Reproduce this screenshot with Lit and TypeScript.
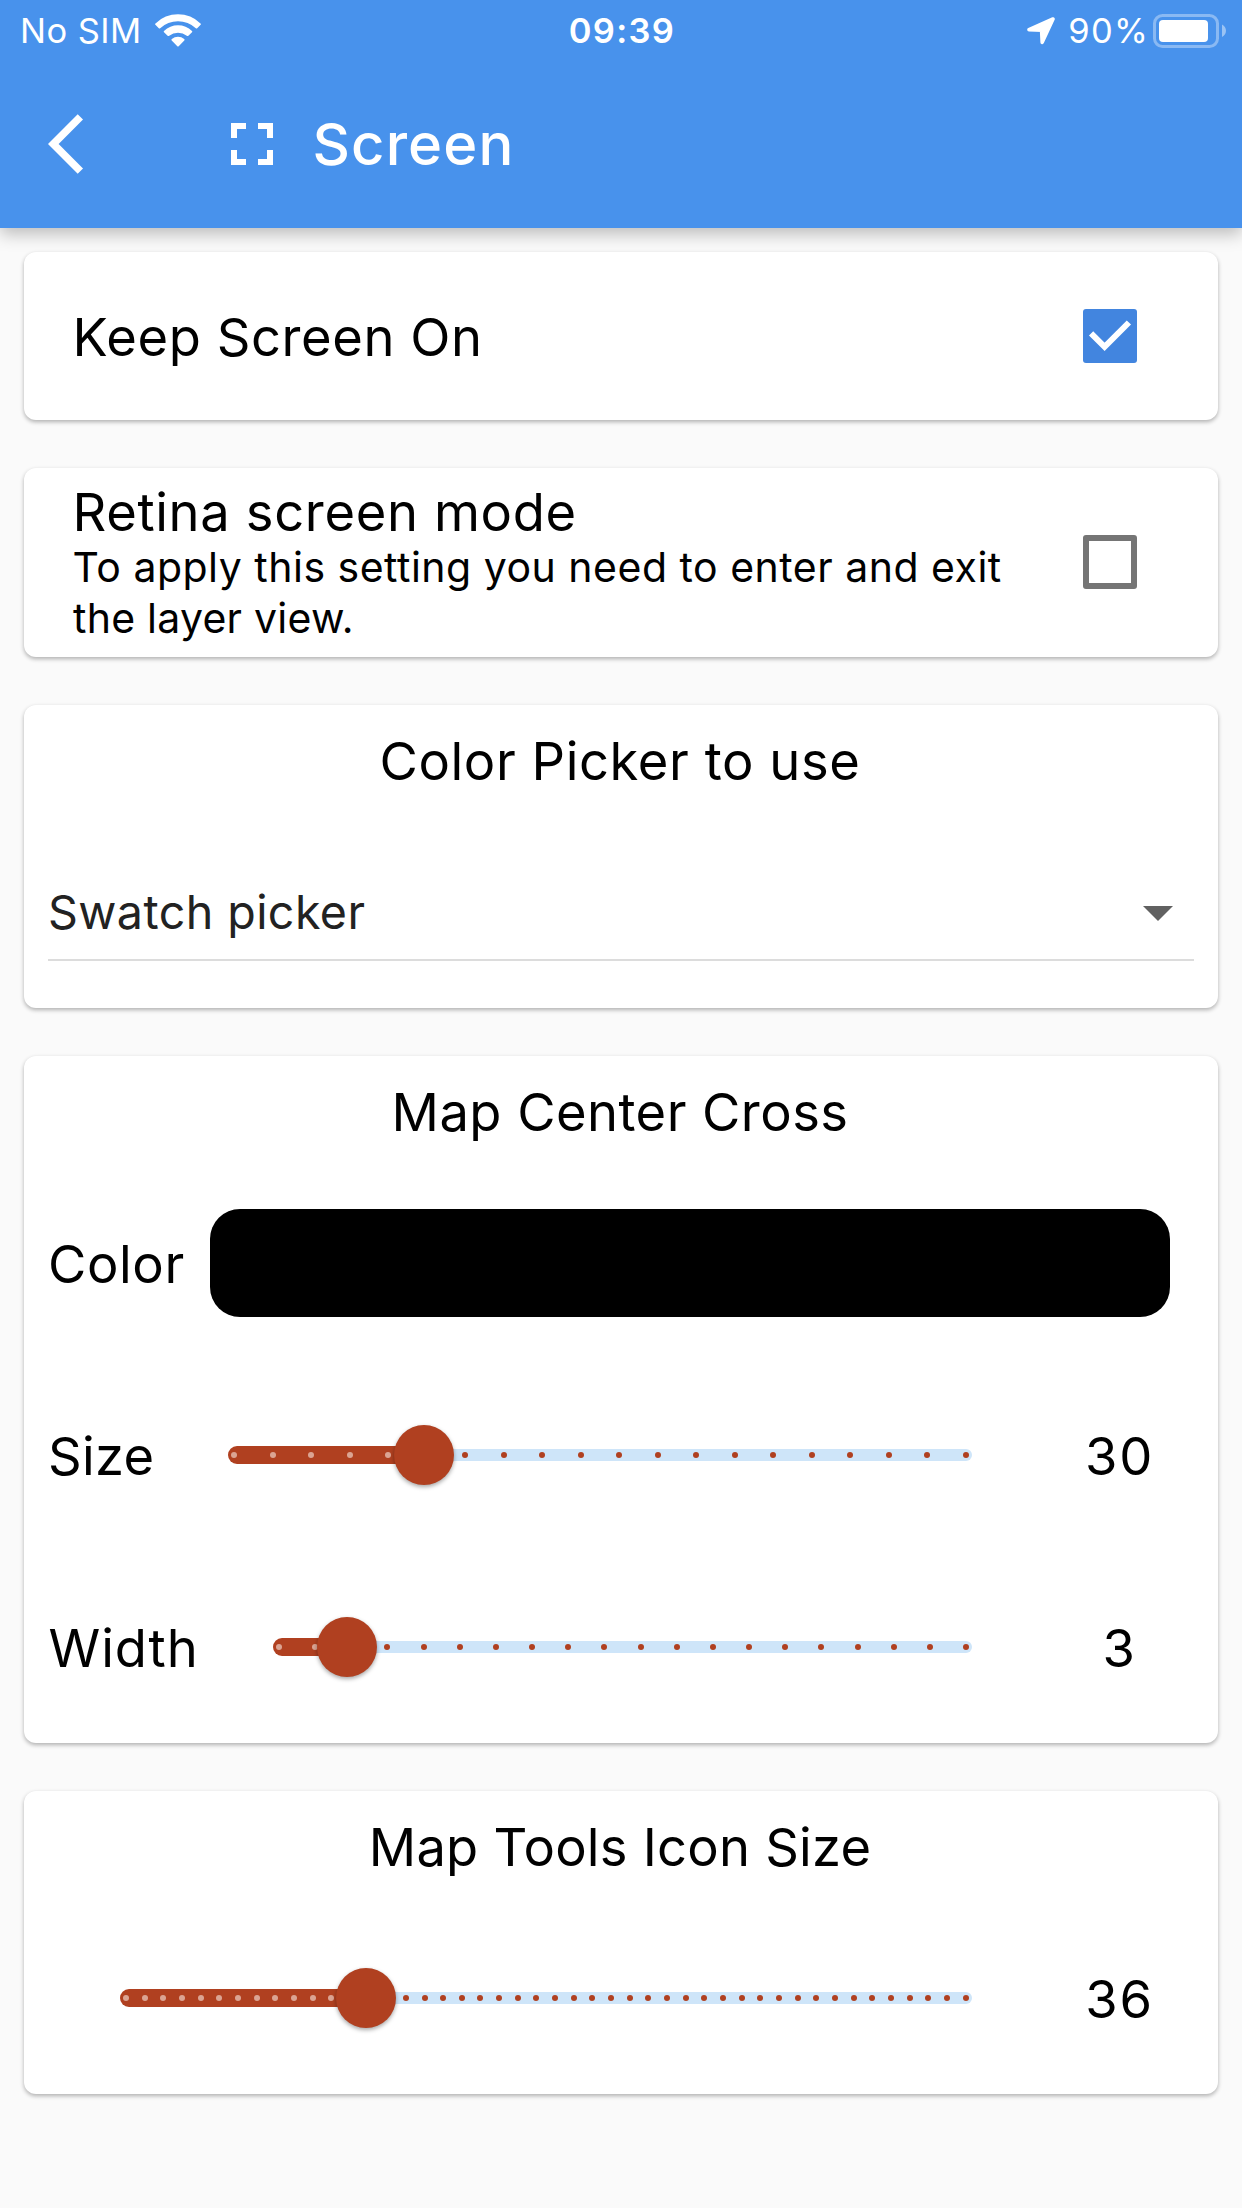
import { LitElement, html, css } from "lit";
import { customElement, property, state } from "lit/decorators.js";

@customElement("status-bar")
export class StatusBar extends LitElement {
  static styles = css`
    :host {
      display: grid;
      grid-template-columns: 1fr auto 1fr;
      align-items: center;
      height: 60px;
      padding: 0 15px 0 20px;
      color: #fff;
      font-size: 34.5px;
      line-height: 60px;
    }
    .group {
      display: flex;
      align-items: center;
      height: 60px;
    }
    .end {
      justify-content: flex-end;
    }
    .text {
      margin-top: 1px;
      white-space: nowrap;
    }
    .carrier {
      letter-spacing: 0.45px;
      margin-right: 13.5px;
    }
    .time {
      font-weight: 600;
      letter-spacing: 1.3px;
      margin-left: -3px;
    }
    .percent {
      letter-spacing: 1.2px;
      margin-left: 12px;
      margin-right: 4px;
    }
    svg {
      display: block;
      flex: none;
    }
    .arrow {
      margin-top: 1px;
    }
  `;

  render() {
    return html`
      <div class="group">
        <span class="text carrier">No SIM</span>
        <svg width="46" height="34" viewBox="0 0 46 34" fill="#fff">
          <path d="M0.5 9.4 A32 32 0 0 1 45.5 9.4 Q46.3 10.1 45.6 10.8 L42.2 14.2 Q41.5 14.8 40.8 14.2 A26 26 0 0 0 5.2 14.2 Q4.5 14.8 3.8 14.2 L0.4 10.8 Q-0.3 10.1 0.5 9.4Z" />
          <path d="M9 16.9 A20.5 20.5 0 0 1 37 16.9 Q37.7 17.6 37 18.3 L33.4 21.8 Q32.6 22.4 31.8 21.8 A14 14 0 0 0 14.2 21.8 Q13.4 22.4 12.6 21.8 L9 18.3 Q8.3 17.6 9 16.9Z" />
          <path d="M16.8 25 A10 10 0 0 1 29.2 25 Q30 25.7 29.3 26.4 L23.7 32.2 Q23 32.9 22.3 32.2 L16.7 26.4 Q16 25.7 16.8 25Z" />
        </svg>
      </div>
      <span class="text time">09:39</span>
      <div class="group end">
        <svg class="arrow" width="29" height="28" viewBox="0 0 29 28">
          <path d="M2 12.6 L26 2 L15.2 25.3 L14.6 13.1Z" fill="#fff" stroke="#fff" stroke-width="3.6" stroke-linejoin="round" />
        </svg>
        <span class="text percent">90%</span>
        <svg width="74" height="34" viewBox="0 0 74 34">
          <rect x="1.5" y="1.5" width="63" height="31" rx="8" fill="none" stroke="#fff" stroke-opacity=".36" stroke-width="3" />
          <rect x="6" y="6" width="49" height="22" rx="4" fill="#fff" />
          <path d="M69 10.6 Q73 13 73 16.8 T69 23Z" fill="#fff" fill-opacity=".45" />
        </svg>
      </div>
    `;
  }
}

@customElement("settings-slider")
export class SettingsSlider extends LitElement {
  @property({ type: Number }) divisions = 19;
  @property({ type: Number }) index = 0;

  static styles = css`
    :host {
      display: block;
    }
    .track {
      position: relative;
      display: flex;
      align-items: center;
      height: 60px;
    }
    .active {
      height: 18px;
      border-radius: 9px 0 0 9px;
      background: #b04020;
    }
    .rest {
      flex: 1;
      height: 12px;
      border-radius: 0 6px 6px 0;
      background: #cee5f9;
    }
    .ticks {
      position: absolute;
      inset: 0 3px;
      display: flex;
      justify-content: space-between;
      align-items: center;
    }
    .tick {
      width: 6px;
      height: 6px;
      border-radius: 50%;
      background: #b04020;
    }
    .tick.on {
      background: #dba493;
    }
    .thumb {
      position: absolute;
      top: 0;
      width: 60px;
      height: 60px;
      margin-left: -30px;
      border-radius: 50%;
      background: #b04020;
      box-shadow: 0 2px 4px rgba(0, 0, 0, 0.35);
    }
  `;

  render() {
    const pos = `${(this.index / this.divisions) * 100}%`;
    const ticks = Array.from({ length: this.divisions + 1 }, (_, i) => i);
    return html`
      <div class="track">
        <div class="active" style="width:${pos}"></div>
        <div class="rest"></div>
        <div class="ticks">
          ${ticks.map((i) => html`<i class="tick ${i < this.index ? "on" : ""}"></i>`)}
        </div>
        <div class="thumb" style="left:${pos}"></div>
      </div>
    `;
  }
}

@customElement("app-root")
export class AppRoot extends LitElement {
  @state() private keepOn = true;
  @state() private retina = false;

  static styles = css`
    :host {
      display: block;
      width: 1242px;
      height: 2208px;
      overflow: hidden;
      background: #fafafa;
      color: #000;
      font-family: Inter, "Liberation Sans", sans-serif;
    }
    .header {
      height: 228px;
      background: #4892ec;
      box-shadow: 0 6px 16px rgba(0, 0, 0, 0.25);
    }
    .bar {
      display: flex;
      align-items: center;
      height: 168px;
      padding-left: 48px;
      color: #fff;
    }
    .bar svg {
      display: block;
      fill: #fff;
    }
    .expand {
      margin-left: 132px;
    }
    .heading {
      margin: 0 0 0 24.5px;
      font-size: 58px;
      font-weight: 500;
      line-height: 72px;
      letter-spacing: 1.1px;
    }
    .cards {
      display: flex;
      flex-direction: column;
      gap: 48px;
      padding: 24px;
    }
    .card {
      background: #fff;
      border-radius: 12px;
      box-shadow: 0 2px 4px rgba(0, 0, 0, 0.3);
      font-size: 52.5px;
      line-height: 64px;
    }
    .toggle {
      display: flex;
      align-items: center;
      justify-content: space-between;
      padding: 0 81px 0 48.5px;
    }
    .short {
      height: 168px;
    }
    .tall {
      height: 189px;
    }
    .keep {
      letter-spacing: 0.58px;
      padding-top: 2px;
    }
    .retina {
      letter-spacing: 0.65px;
      line-height: 60px;
    }
    .copy {
      margin-top: 1px;
      height: 162px;
    }
    .note {
      font-size: 41px;
      line-height: 51px;
      letter-spacing: 0.5px;
      white-space: nowrap;
    }
    .last {
      letter-spacing: 0.25px;
      padding-left: 0.5px;
    }
    .box {
      box-sizing: border-box;
      width: 54px;
      height: 54px;
      border: 6px solid #757575;
      border-radius: 3px;
    }
    .tall .box {
      margin-bottom: 1px;
    }
    .box.checked {
      border: 0;
      background: #4285df;
    }
    .box svg {
      display: block;
    }
    .title {
      box-sizing: border-box;
      height: 111px;
      padding-top: 24px;
      padding-right: 2px;
      text-align: center;
    }
    .t1 {
      letter-spacing: 0.58px;
    }
    .t2 {
      letter-spacing: 0.45px;
    }
    .t3 {
      letter-spacing: 0.22px;
    }
    .picker {
      padding: 49px 24px 47px;
    }
    .select {
      display: flex;
      align-items: center;
      justify-content: space-between;
      height: 94px;
      padding-right: 21px;
      border-bottom: 2px solid #dcdcdc;
      font-size: 46.6px;
      letter-spacing: 0.42px;
      color: #222;
    }
    .caret {
      display: block;
      margin-top: 3px;
    }
    .row {
      display: grid;
      align-items: center;
      height: 192px;
      padding-left: 24px;
    }
    .color {
      grid-template-columns: 162px 960px;
    }
    .size {
      grid-template-columns: 180px 744px 71px 153px;
    }
    .width {
      grid-template-columns: 225px 699px 71px 153px;
    }
    .icons {
      grid-template-columns: 72px 852px 71px 153px;
    }
    .slider {
      grid-column: 2;
    }
    .label,
    .value {
      padding-top: 2px;
    }
    .color .label {
      letter-spacing: 0.6px;
    }
    .size .label {
      letter-spacing: 0.3px;
    }
    .width .label {
      letter-spacing: 0.9px;
      padding-left: 0.5px;
    }
    .value {
      grid-column: 4;
      text-align: center;
      letter-spacing: 1.8px;
    }
    .swatch {
      height: 108px;
      border-radius: 30px;
      background: #000;
    }
  `;

  private box(on: boolean, toggle: () => void) {
    return html`
      <div class="box ${on ? "checked" : ""}" role="checkbox" aria-checked=${on ? "true" : "false"} @click=${toggle}>
        ${on
          ? html`<svg width="54" height="54" viewBox="0 0 54 54">
              <path d="M8.1 24.3 L21.6 37.8 L45.9 13.5" fill="none" stroke="#fff" stroke-width="6" />
            </svg>`
          : ""}
      </div>
    `;
  }

  render() {
    return html`
      <header class="header">
        <status-bar></status-bar>
        <div class="bar">
          <svg width="36" height="60" viewBox="0 2 12 20">
            <path d="M11.67 3.87 9.9 2.1 0 12l9.9 9.9 1.77-1.77L3.54 12z" />
          </svg>
          <svg class="expand" width="72" height="72" viewBox="0 0 24 24">
            <path d="M7 14H5v5h5v-2H7v-3zm-2-4h2V7h3V5H5v5zm12 7h-3v2h5v-5h-2v3zM14 5v2h3v3h2V5h-5z" />
          </svg>
          <h1 class="heading">Screen</h1>
        </div>
      </header>
      <main class="cards">
        <section class="card toggle short">
          <span class="keep">Keep Screen On</span>
          ${this.box(this.keepOn, () => (this.keepOn = !this.keepOn))}
        </section>
        <section class="card toggle tall">
          <div class="copy">
            <div class="retina">Retina screen mode</div>
            <div class="note">To apply this setting you need to enter and exit</div>
            <div class="note last">the layer view.</div>
          </div>
          ${this.box(this.retina, () => (this.retina = !this.retina))}
        </section>
        <section class="card">
          <div class="title t1">Color Picker to use</div>
          <div class="picker">
            <div class="select">
              <span>Swatch picker</span>
              <svg class="caret" width="30" height="15" viewBox="0 0 30 15">
                <path d="M0 0h30L15 15z" fill="#616161" />
              </svg>
            </div>
          </div>
        </section>
        <section class="card">
          <div class="title t2">Map Center Cross</div>
          <div class="row color">
            <span class="label">Color</span>
            <div class="swatch"></div>
          </div>
          <div class="row size">
            <span class="label">Size</span>
            <settings-slider class="slider" .divisions=${19} .index=${5}></settings-slider>
            <span class="value">30</span>
          </div>
          <div class="row width">
            <span class="label">Width</span>
            <settings-slider class="slider" .divisions=${19} .index=${2}></settings-slider>
            <span class="value">3</span>
          </div>
        </section>
        <section class="card">
          <div class="title t3">Map Tools Icon Size</div>
          <div class="row icons">
            <settings-slider class="slider" .divisions=${45} .index=${13}></settings-slider>
            <span class="value">36</span>
          </div>
        </section>
      </main>
    `;
  }
}
